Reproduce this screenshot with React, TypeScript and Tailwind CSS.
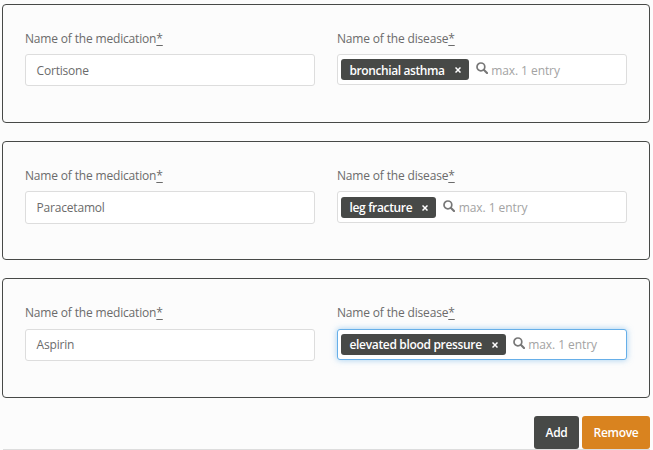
type Entry = {
  medication: string;
  disease: string;
  card: string;
  field: string;
  tags: string;
  tagText: string;
  hint: string;
};

const entries: Entry[] = [
  {
    medication: "Cortisone",
    disease: "bronchial asthma",
    card: "h-[119px]",
    field: "h-8 pt-[2px]",
    tags: "h-[31px] border-[#dddddd]",
    tagText: "pt-[2px] tracking-[-0.4px]",
    hint: "pt-[3px]",
  },
  {
    medication: "Paracetamol",
    disease: "leg fracture",
    card: "h-[119px]",
    field: "h-[33px] pt-px",
    tags: "h-8 pt-px border-[#dddddd]",
    tagText: "pt-px tracking-[-0.35px]",
    hint: "pt-px",
  },
  {
    medication: "Aspirin",
    disease: "elevated blood pressure",
    card: "h-[120px]",
    field: "h-8 mt-px",
    tags: "h-[31px] mt-px border-[#66afe9] shadow-[0_0_6px_rgba(102,175,233,0.6)]",
    tagText: "pt-px tracking-[-0.33px]",
    hint: "pt-px",
  },
];

function SearchIcon() {
  return (
    <svg className="ml-[7px] -mt-[3px] h-3 w-3 shrink-0" viewBox="0 0 12 12" fill="none" stroke="#777777">
      <circle cx="4.9" cy="4.9" r="3.9" strokeWidth="1.7" />
      <path d="M7.8 7.8 L11 11" strokeWidth="2.1" strokeLinecap="round" />
    </svg>
  );
}

function Label({ text }: { text: string }) {
  return (
    <label className="block h-4 leading-4 tracking-[-0.17px]">
      {text}
      <span className="underline underline-offset-2">*</span>
    </label>
  );
}

function EntryCard({ entry }: { entry: Entry }) {
  return (
    <section className={`flex gap-[22px] rounded-[4px] border border-[#474947] px-[22px] pt-[26px] ${entry.card}`}>
      <div className="w-[290px]">
        <Label text="Name of the medication" />
        <div className="pt-[7px]">
          <div className={`flex items-center rounded-[3px] border border-[#dddddd] bg-white px-[10.6px] tracking-[-0.2px] ${entry.field}`}>
            {entry.medication}
          </div>
        </div>
      </div>
      <div className="w-[290px]">
        <Label text="Name of the disease" />
        <div className="pt-[7px]">
          <div className={`flex items-center rounded-[3px] border bg-white px-[3px] ${entry.tags}`}>
            <span className="flex h-[21px] items-center rounded-[3px] bg-[#474947] pr-2 pl-[8.5px] font-semibold text-white">
              <span className={entry.tagText}>{entry.disease}</span>
              <svg className="ml-[10px] h-[6px] w-[6px]" viewBox="0 0 6 6" stroke="white" strokeWidth="1.5">
                <path d="M0.5 0.5 L5.5 5.5 M5.5 0.5 L0.5 5.5" />
              </svg>
            </span>
            <SearchIcon />
            <span className={`ml-[3.5px] tracking-[-0.07px] text-[#a3a3a3] ${entry.hint}`}>max. 1 entry</span>
          </div>
        </div>
      </div>
    </section>
  );
}

export default function App() {
  return (
    <main className="h-[450px] w-[653px] overflow-hidden bg-[#fcfcfc] pt-1 pr-[3px] pl-[2px] font-['Open_Sans','Noto_Sans',sans-serif] text-[12px] text-[#6b6b6b]">
      <div className="flex flex-col gap-[18px]">
        {entries.map((entry) => (
          <EntryCard key={entry.medication} entry={entry} />
        ))}
        <div className="ml-px flex h-[34px] items-start justify-end gap-[3px] border-b border-[#dddddd] font-semibold tracking-[-0.3px] text-white">
          <button className="h-[33px] w-[45px] rounded-[3px] bg-[#474947]">Add</button>
          <button className="h-[33px] w-[68px] rounded-[3px] bg-[#d9831f]">Remove</button>
        </div>
      </div>
    </main>
  );
}
